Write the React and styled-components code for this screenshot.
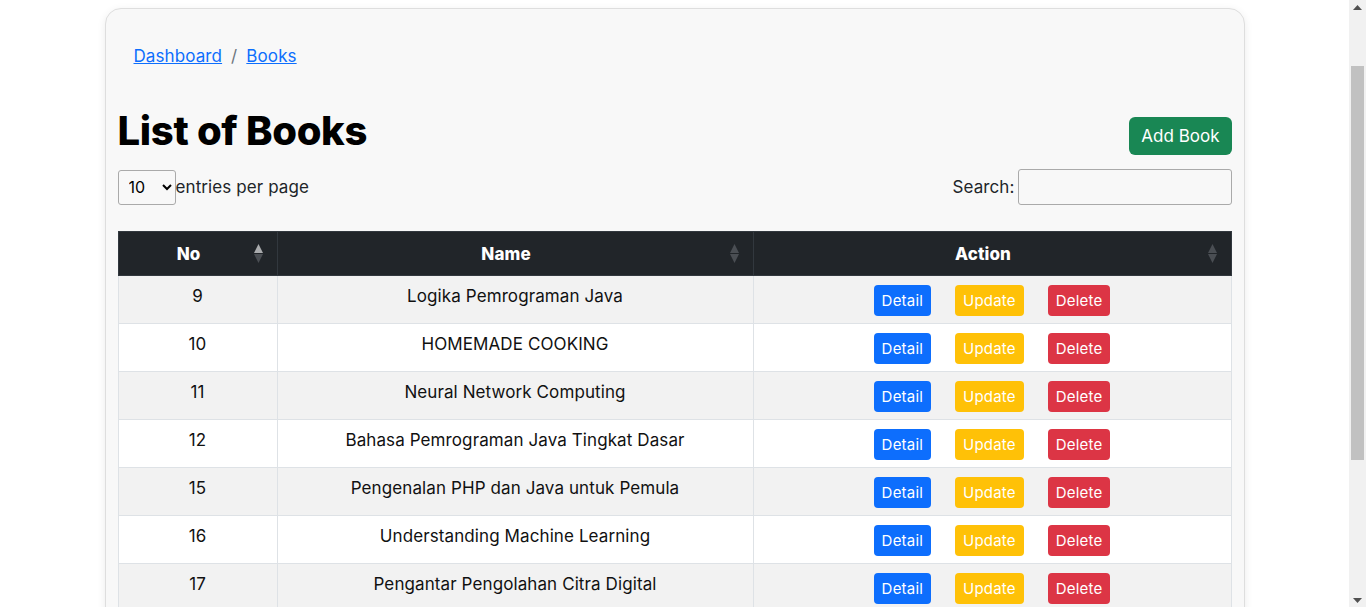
import styled, { createGlobalStyle } from "styled-components";

const GlobalStyle = createGlobalStyle`
  body {
    margin: 0;
    padding-right: 17px;
    background: #fff;
    font-family: "Inter", "Open Sans", sans-serif;
    color: #212529;
  }
`;

const books = [
  { no: 9, name: "Logika Pemrograman Java" },
  { no: 10, name: "HOMEMADE COOKING" },
  { no: 11, name: "Neural Network Computing" },
  { no: 12, name: "Bahasa Pemrograman Java Tingkat Dasar" },
  { no: 15, name: "Pengenalan PHP dan Java untuk Pemula" },
  { no: 16, name: "Understanding Machine Learning" },
  { no: 17, name: "Pengantar Pengolahan Citra Digital" },
  { no: 18, name: "Dasar-Dasar Basis Data" },
  { no: 19, name: "Algoritma dan Struktur Data" },
  { no: 20, name: "Jaringan Komputer Modern" },
];

// Page container (bootstrap-ish card)
const Card = styled.div`
  box-sizing: border-box;
  width: 1140px;
  margin: 8px auto 40px;
  padding: 0 12px 24px;
  background: #f8f8f8;
  border: 1px solid #dedede;
  border-radius: 16px;
  box-shadow: 0 2px 8px rgba(0, 0, 0, 0.08);
`;

const Breadcrumb = styled.nav`
  display: flex;
  align-items: center;
  gap: 9px;
  padding: 35px 16px 0;
  font-size: 17px;
  letter-spacing: 0.1px;
  line-height: 24px;
`;

const Crumb = styled.a`
  color: #0d6efd;
  text-decoration: underline;
  cursor: pointer;
`;

const Divider = styled.span`
  color: #6c757d;
`;

const TitleRow = styled.div`
  display: flex;
  justify-content: space-between;
  align-items: center;
  margin-top: 39px;
`;

const Title = styled.h1`
  margin: 0;
  font-size: 40px;
  line-height: 48px;
  font-weight: 800;
  color: #000;
  letter-spacing: -0.3px;
`;

const AddButton = styled.button`
  margin-top: 9px;
  height: 38px;
  padding: 0 12px;
  border: none;
  border-radius: 6px;
  background: #198754;
  color: #fff;
  font-family: inherit;
  font-size: 17px;
`;

const Controls = styled.div`
  display: flex;
  justify-content: space-between;
  align-items: center;
  margin-top: 14px;
  margin-bottom: 26px;
  font-size: 17px;
  letter-spacing: 0.1px;
`;

const Entries = styled.label`
  display: flex;
  align-items: center;
`;

const Select = styled.select`
  width: 58px;
  height: 35px;
  padding: 0 6px;
  border: 1px solid #aaa;
  border-radius: 3px;
  background: transparent;
  font-family: inherit;
  font-size: 16px;
  color: #000;
`;

const SearchLabel = styled.label`
  display: flex;
  align-items: center;
  gap: 3px;
`;

const SearchInput = styled.input`
  box-sizing: border-box;
  width: 214px;
  height: 36px;
  border: 1px solid #aaa;
  border-radius: 3px;
  background: transparent;
`;

const Table = styled.table`
  width: 100%;
  border-collapse: collapse;
  background: #fff;
  font-size: 17px;
  letter-spacing: 0.1px;
`;

const Th = styled.th`
  position: relative;
  height: 44px;
  box-sizing: border-box;
  padding: 0 26px 0 8px;
  background: #212529;
  color: #fff;
  font-weight: 800;
  border: 1px solid #32383e;
  width: ${(p) => p.$w};
`;

const SortIcon = styled.svg`
  position: absolute;
  right: 14px;
  top: 12px;
`;

const Tr = styled.tr`
  background: ${(p) => (p.$odd ? "#f2f2f2" : "#fff")};
`;

const Td = styled.td`
  height: 48px;
  box-sizing: border-box;
  padding: 8px 8px 0;
  border: 1px solid #dee2e6;
  text-align: center;
  vertical-align: top;
  line-height: 24px;
  color: #111;
`;

const Actions = styled.div`
  display: flex;
  justify-content: center;
  gap: 24px;
  margin-top: 1px;
`;

const SmallButton = styled.button`
  height: 31px;
  padding: 0 8px;
  border: none;
  border-radius: 4px;
  background: ${(p) => p.$bg};
  color: #fff;
  font-family: inherit;
  font-size: 15px;
  letter-spacing: 0.2px;
`;

// fake browser scrollbar drawn on top at the right edge
const Scrollbar = styled.div`
  position: fixed;
  top: 0;
  right: 0;
  width: 17px;
  height: 100vh;
  background: #f1f1f1;
`;

const Thumb = styled.div`
  position: absolute;
  top: 66px;
  left: 2px;
  width: 13px;
  height: 394px;
  background: #c1c1c1;
`;

const Arrow = styled.svg`
  position: absolute;
  left: 4px;
  ${(p) => (p.$down ? "bottom: 4px;" : "top: 5px;")}
`;

function Sort({ active }) {
  return (
    <SortIcon width="9" height="20" viewBox="0 0 9 20">
      <polygon points="4.5,0 9,9 0,9" fill={active ? "#a9abad" : "#4a4e53"} />
      <polygon points="0,10 9,10 4.5,19" fill="#4a4e53" />
    </SortIcon>
  );
}

export default function App() {
  return (
    <>
      <GlobalStyle />
      <Card>
        <Breadcrumb>
          <Crumb>Dashboard</Crumb>
          <Divider>/</Divider>
          <Crumb>Books</Crumb>
        </Breadcrumb>

        <TitleRow>
          <Title>List of Books</Title>
          <AddButton>Add Book</AddButton>
        </TitleRow>

        <Controls>
          <Entries>
            <Select defaultValue="10">
              <option>5</option>
              <option>10</option>
              <option>25</option>
            </Select>
            entries per page
          </Entries>
          <SearchLabel>
            Search:
            <SearchInput type="search" />
          </SearchLabel>
        </Controls>

        <Table>
          <thead>
            <tr>
              <Th $w="159px">
                No
                <Sort active />
              </Th>
              <Th $w="476px">
                Name
                <Sort />
              </Th>
              <Th>
                Action
                <Sort />
              </Th>
            </tr>
          </thead>
          <tbody>
            {books.map((b, i) => (
              <Tr key={b.no} $odd={i % 2 === 0}>
                <Td>{b.no}</Td>
                <Td>{b.name}</Td>
                <Td>
                  <Actions>
                    <SmallButton $bg="#0d6efd">Detail</SmallButton>
                    <SmallButton $bg="#ffc107">Update</SmallButton>
                    <SmallButton $bg="#dc3545">Delete</SmallButton>
                  </Actions>
                </Td>
              </Tr>
            ))}
          </tbody>
        </Table>
      </Card>
      <Scrollbar>
        <Arrow width="9" height="5" viewBox="0 0 9 5">
          <polygon points="4.5,0 9,5 0,5" fill="#505050" />
        </Arrow>
        <Thumb />
        <Arrow $down width="9" height="5" viewBox="0 0 9 5">
          <polygon points="0,0 9,0 4.5,5" fill="#505050" />
        </Arrow>
      </Scrollbar>
    </>
  );
}
